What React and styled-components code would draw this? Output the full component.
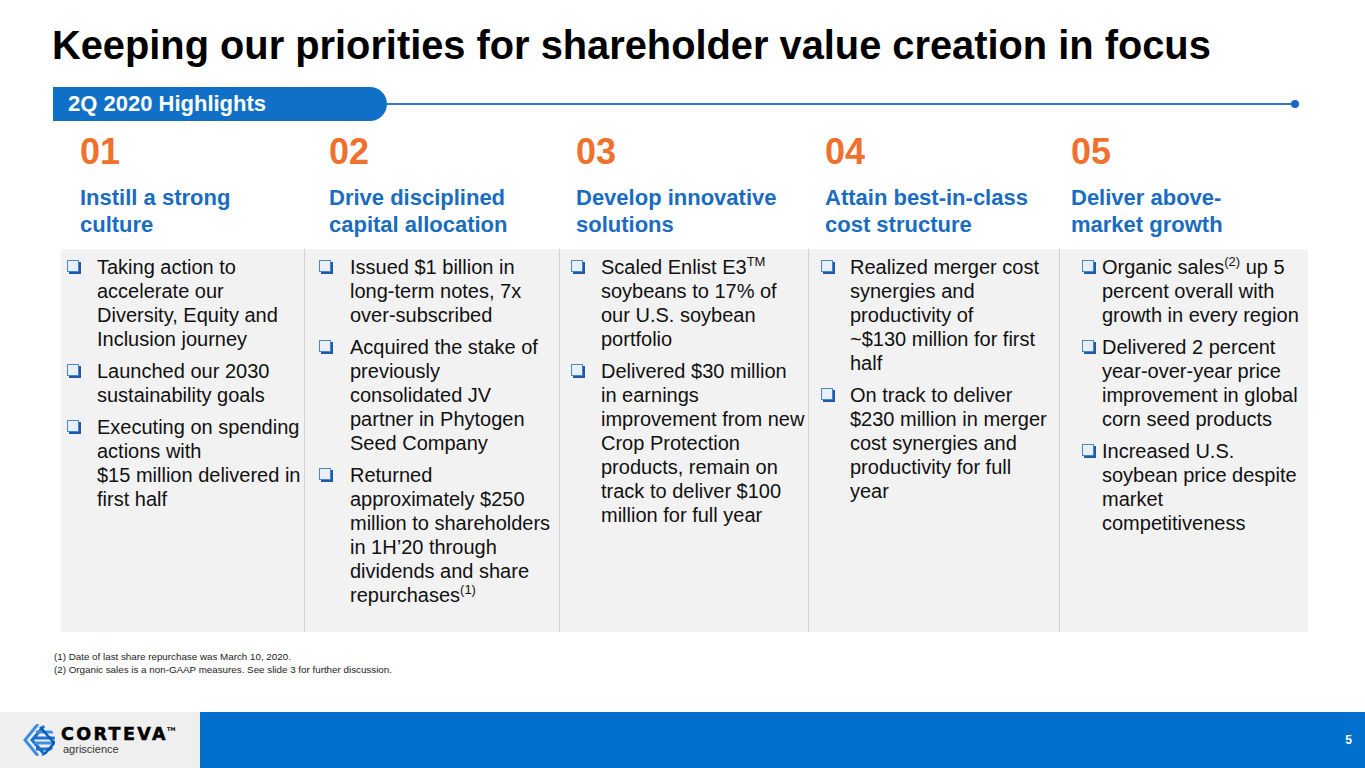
import React from 'react';
import styled, { createGlobalStyle } from 'styled-components';

const Global = createGlobalStyle`
  html, body { margin: 0; padding: 0; background: #fff; }
  body { font-family: "Liberation Sans", Arial, sans-serif; }
`;

const Page = styled.div`
  width: 1365px;
  height: 768px;
  display: flex;
  flex-direction: column;
  overflow: hidden;
  background: #fff;
`;

const Title = styled.h1`
  margin: 0;
  padding: 22px 0 0 52px;
  font-size: 39.8px;
  line-height: 46px;
  font-weight: 700;
  color: #000;
  white-space: nowrap;
`;

const TabRow = styled.div`
  display: flex;
  align-items: center;
  margin: 19px 0 0 53px;
  width: 1246px;
`;

const Tab = styled.div`
  width: 334px;
  height: 34px;
  box-sizing: border-box;
  padding-left: 15px;
  background: #1070c8;
  color: #fff;
  font-size: 22px;
  font-weight: 700;
  line-height: 34px;
  border-radius: 0 17px 17px 0;
  white-space: nowrap;
`;

const Rule = styled.div`
  flex: 1;
  height: 2px;
  background: #2f76c4;
`;

const Dot = styled.div`
  width: 8px;
  height: 8px;
  border-radius: 50%;
  background: #1468c4;
`;

const HeadGrid = styled.div`
  display: grid;
  grid-template-columns: 249px 247px 249px 246px 240px;
  margin: 11px 0 0 80px;
`;

const HeadCell = styled.div`
  display: flex;
  flex-direction: column;
`;

const Num = styled.div`
  font-size: 36px;
  line-height: 40px;
  font-weight: 700;
  color: #f0702e;
`;

const Heading = styled.div`
  margin-top: 12px;
  font-size: 22px;
  line-height: 27px;
  font-weight: 700;
  color: #1a6cc0;
  white-space: nowrap;
`;

const Panel = styled.div`
  display: grid;
  grid-template-columns: 243px 255px 249px 251px 249px;
  width: 1247px;
  height: 383px;
  margin: 11px 0 0 61px;
  background: #f2f2f2;
`;

const Col = styled.div`
  box-sizing: border-box;
  padding: 6px 0 0 ${p => p.$pad}px;
  border-left: ${p => (p.$first ? 'none' : '1px solid #d2d2d2')};
  display: flex;
  flex-direction: column;
  gap: 8px;
`;

const Item = styled.div`
  display: flex;
  align-items: flex-start;
`;

const Check = styled.span`
  flex: none;
  box-sizing: border-box;
  width: 12px;
  height: 12px;
  margin-top: 5px;
  margin-right: ${p => p.$gap}px;
  border: 1.5px solid #4a86cc;
  background: #e8eff8;
  box-shadow: 2px 2px 0 #1f5aa6;
`;

const Text = styled.div`
  font-size: 20px;
  line-height: 24px;
  color: #111;
  white-space: nowrap;
`;

const Sup = styled.sup`
  font-size: 13px;
  line-height: 0;
  vertical-align: 0;
  position: relative;
  top: -8px;
`;

const Notes = styled.div`
  margin: 18px 0 0 54px;
  font-size: 9.8px;
  line-height: 13px;
  color: #222;
`;

const Footer = styled.footer`
  margin-top: auto;
  height: 56px;
  display: flex;
`;

const LogoBox = styled.div`
  width: 200px;
  background: #efefef;
  display: flex;
  align-items: center;
  padding-left: 22px;
  box-sizing: border-box;
  gap: 5px;
`;

const Brand = styled.div`
  display: flex;
  flex-direction: column;
`;

const BrandName = styled.div`
  font-family: "DejaVu Sans", sans-serif;
  font-weight: 700;
  font-size: 17.5px;
  line-height: 17px;
  letter-spacing: 2.4px;
  color: #000;
  -webkit-text-stroke: 0.5px #000;
  display: flex;
  align-items: flex-start;
`;

const Tm = styled.span`
  font-size: 5px;
  letter-spacing: 0;
  line-height: 6px;
  margin-left: -1px;
  -webkit-text-stroke: 0;
`;

const BrandSub = styled.div`
  font-family: "Liberation Sans", Arial, sans-serif;
  font-size: 11px;
  line-height: 12px;
  color: #333;
  padding-left: 2px;
`;

const BlueBar = styled.div`
  flex: 1;
  background: #0070cd;
  display: flex;
  align-items: center;
  justify-content: flex-end;
  padding-right: 13px;
`;

const PageNum = styled.span`
  color: #fff;
  font-size: 12px;
  font-weight: 700;
`;

const Logo = () => (
  <svg width="34" height="34" viewBox="0 0 34 34">
    <defs>
      <clipPath id="lc">
        <circle cx="17" cy="17" r="16" />
      </clipPath>
    </defs>
    <g clipPath="url(#lc)" fill="none" strokeWidth="3" strokeLinecap="butt">
      <path d="M16 1 L3 17 L16 33" stroke="#3d8fde" />
      <path d="M22 3 L10 17 L22 31" stroke="#1a6fd0" />
      <path d="M14 9 L34 9" stroke="#3d8fde" />
      <path d="M12 15 L34 15" stroke="#1a6fd0" />
      <path d="M12 20 L34 20" stroke="#3d8fde" />
      <path d="M14 26 L34 26" stroke="#1a6fd0" />
      <path d="M20 34 L34 18" stroke="#0b5bb8" strokeWidth="2.5" />
      <path d="M26 34 L36 22" stroke="#0b5bb8" strokeWidth="2.5" />
      <path d="M18 4 L34 22" stroke="#0b5bb8" strokeWidth="2.5" />
    </g>
  </svg>
);

const heads = [
  ['01', 'Instill a strong', 'culture'],
  ['02', 'Drive disciplined', 'capital allocation'],
  ['03', 'Develop innovative', 'solutions'],
  ['04', 'Attain best-in-class', 'cost structure'],
  ['05', 'Deliver above-', 'market growth'],
];

const L = ({ lines }) =>
  lines.map((l, i) => (
    <React.Fragment key={i}>
      {i > 0 && <br />}
      {l}
    </React.Fragment>
  ));

const cols = [
  {
    pad: 6,
    gap: 18,
    items: [
      ['Taking action to', 'accelerate our', 'Diversity, Equity and', 'Inclusion journey'],
      ['Launched our 2030', 'sustainability goals'],
      ['Executing on spending', 'actions with', '$15 million delivered in', 'first half'],
    ],
  },
  {
    pad: 14,
    gap: 19,
    items: [
      ['Issued $1 billion in', 'long-term notes, 7x', 'over-subscribed'],
      ['Acquired the stake of', 'previously', 'consolidated JV', 'partner in Phytogen', 'Seed Company'],
      [
        'Returned',
        'approximately $250',
        'million to shareholders',
        'in 1H’20 through',
        'dividends and share',
        <>repurchases<Sup>(1)</Sup></>,
      ],
    ],
  },
  {
    pad: 11,
    gap: 18,
    items: [
      [<>Scaled Enlist E3<Sup>TM</Sup></>, 'soybeans to 17% of', 'our U.S. soybean', 'portfolio'],
      [
        'Delivered $30 million',
        'in earnings',
        'improvement from new',
        'Crop Protection',
        'products, remain on',
        'track to deliver $100',
        'million for full year',
      ],
    ],
  },
  {
    pad: 12,
    gap: 17,
    items: [
      ['Realized merger cost', 'synergies and', 'productivity of', '~$130 million for first', 'half'],
      ['On track to deliver', '$230 million in merger', 'cost synergies and', 'productivity for full', 'year'],
    ],
  },
  {
    pad: 22,
    gap: 8,
    items: [
      [<>Organic sales<Sup>(2)</Sup> up 5</>, 'percent overall with', 'growth in every region'],
      ['Delivered 2 percent', 'year-over-year price', 'improvement in global', 'corn seed products'],
      ['Increased U.S.', 'soybean price despite', 'market', 'competitiveness'],
    ],
  },
];

export default function App() {
  return (
    <>
      <Global />
      <Page>
        <Title>Keeping our priorities for shareholder value creation in focus</Title>
        <TabRow>
          <Tab>2Q 2020 Highlights</Tab>
          <Rule />
          <Dot />
        </TabRow>
        <HeadGrid>
          {heads.map(([n, a, b]) => (
            <HeadCell key={n}>
              <Num>{n}</Num>
              <Heading>
                {a}
                <br />
                {b}
              </Heading>
            </HeadCell>
          ))}
        </HeadGrid>
        <Panel>
          {cols.map((c, ci) => (
            <Col key={ci} $pad={c.pad} $first={ci === 0}>
              {c.items.map((lines, ii) => (
                <Item key={ii}>
                  <Check $gap={c.gap} />
                  <Text>
                    <L lines={lines} />
                  </Text>
                </Item>
              ))}
            </Col>
          ))}
        </Panel>
        <Notes>
          (1) Date of last share repurchase was March 10, 2020.
          <br />
          (2) Organic sales is a non-GAAP measures. See slide 3 for further discussion.
        </Notes>
        <Footer>
          <LogoBox>
            <Logo />
            <Brand>
              <BrandName>
                CORTEVA<Tm>TM</Tm>
              </BrandName>
              <BrandSub>agriscience</BrandSub>
            </Brand>
          </LogoBox>
          <BlueBar>
            <PageNum>5</PageNum>
          </BlueBar>
        </Footer>
      </Page>
    </>
  );
}
